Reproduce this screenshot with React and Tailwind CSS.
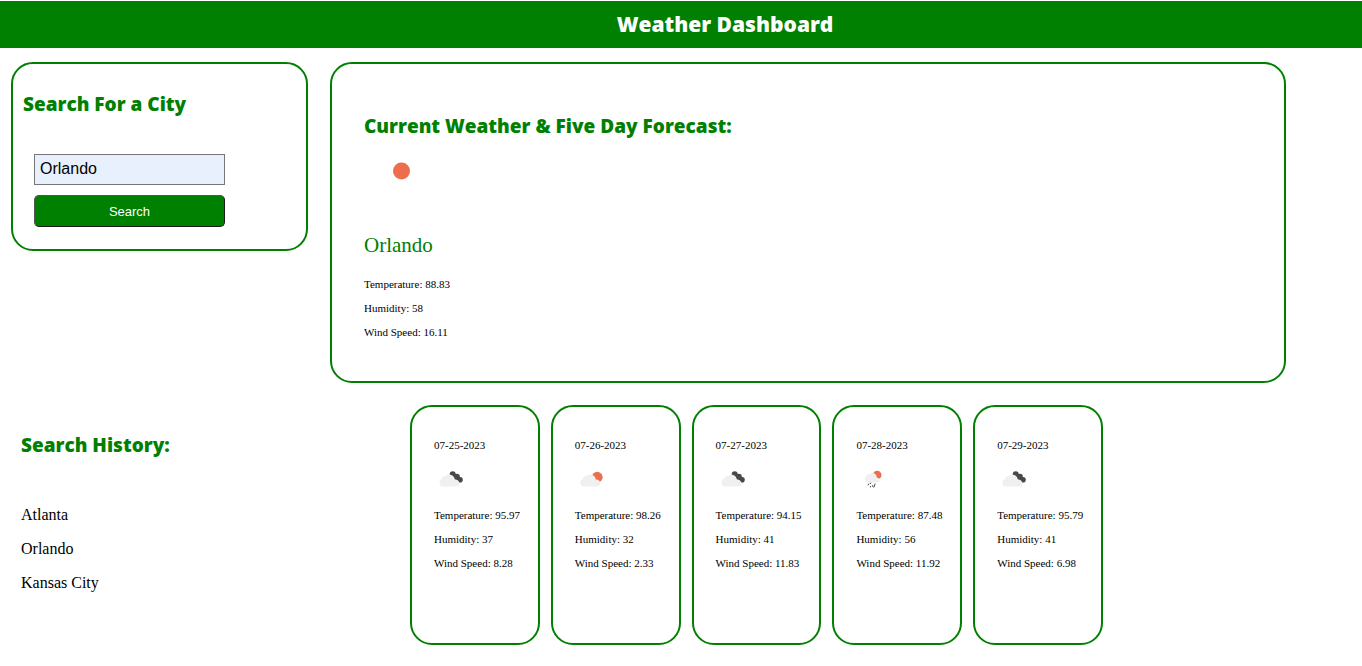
const forecast = [
  { date: "07-25-2023", icon: "broken", temperature: "95.97", humidity: "37", wind: "8.28" },
  { date: "07-26-2023", icon: "few", temperature: "98.26", humidity: "32", wind: "2.33" },
  { date: "07-27-2023", icon: "broken", temperature: "94.15", humidity: "41", wind: "11.83" },
  { date: "07-28-2023", icon: "rain", temperature: "87.48", humidity: "56", wind: "11.92" },
  { date: "07-29-2023", icon: "broken", temperature: "95.79", humidity: "41", wind: "6.98" },
];

const cities = ["Atlanta", "Orlando", "Kansas City"];

function Cloud() {
  return (
    <path
      d="M8.7 26.500a4 4 0 0 1-.6-7.700 3.300 3.300 0 0 1 3.600-2.800 5.400 5.400 0 0 1 9 3.600 4.200 4.200 0 0 1 4.700 4 3.300 3.300 0 0 1-3.200 2.900Z"
      fill="#f0f0f0"
    />
  );
}

function WeatherIcon({ kind }) {
  return (
    <svg className="size-9" viewBox="0 0 36 36" aria-hidden="true">
      {kind === "broken" && (
        <>
          <g fill="#484848">
            <circle cx="18.7" cy="14.3" r="3" />
            <circle cx="22.8" cy="16.9" r="3.1" />
            <circle cx="26" cy="19.7" r="2.8" />
          </g>
          <Cloud />
        </>
      )}
      {kind === "few" && (
        <>
          <circle cx="22.2" cy="17.2" r="5.4" fill="#ec6e4c" />
          <Cloud />
        </>
      )}
      {kind === "rain" && (
        <>
          <circle cx="21.2" cy="15" r="4.3" fill="#ec6e4c" />
          <path
            d="M11.500 22.500a3.400 3.400 0 0 1-.6-6.400 2.500 2.500 0 0 1 2.900-2.200 4.300 4.300 0 0 1 7 3.600 3.100 3.100 0 0 1 2.900 2.800 2.400 2.400 0 0 1-2.400 2.200Z"
            fill="#f0f0f0"
          />
          <g stroke="#484848" strokeWidth="1" strokeLinecap="round">
            <path d="m12.600 24-.5 1M14.600 23.100l-.3.600M14.700 26.300l-.3.700M16.600 25.600l.5 1.300M19 24l-.9 2.900" />
          </g>
        </>
      )}
    </svg>
  );
}

function Heading({ children }) {
  return (
    <h2 className="font-['Gill_Sans','Open_Sans',sans-serif] text-[19px] leading-6 font-extrabold text-[#008000]">
      {children}
    </h2>
  );
}

function Readings({ temperature, humidity, wind }) {
  return (
    <div className="flex flex-col gap-3 text-[11px] leading-3 whitespace-nowrap">
      <p>Temperature: {temperature}</p>
      <p>Humidity: {humidity}</p>
      <p>Wind Speed: {wind}</p>
    </div>
  );
}

export default function App() {
  return (
    <div className="bg-white pt-px font-['Liberation_Serif','Times_New_Roman',serif] text-black">
      <header className="bg-[#008000] py-2 pl-[88px] text-center text-white">
        <h1 className="font-['Gill_Sans','Open_Sans',sans-serif] text-[21px] leading-[31px] font-extrabold">
          Weather Dashboard
        </h1>
      </header>

      <main className="flex flex-col gap-[22px] pt-[14px] pl-[11px]">
        <div className="flex items-start gap-[22px] pr-[76px]">
          <form
            className="w-[297px] shrink-0 rounded-[22px] border-2 border-[#008000] px-[10px] pt-7 pb-[22px]"
            onSubmit={(event) => event.preventDefault()}
          >
            <Heading>
              <label htmlFor="city">Search For a City</label>
            </Heading>
            <div className="mt-[38px] ml-[11px] flex w-[191px] flex-col gap-[10px] font-['Liberation_Sans',Arial,sans-serif]">
              <input
                id="city"
                type="text"
                defaultValue="Orlando"
                className="h-[31px] w-full border border-[#767676] bg-[#e8f0fe] px-[5px] pb-px text-base outline-none"
              />
              <button
                type="submit"
                className="h-8 w-full rounded-[5px] border border-t-[#555555] border-r-[#1c1c1c] border-b-[#1c1c1c] border-l-[#555555] bg-[#008000] pt-px text-[13px] text-white"
              >
                Search
              </button>
            </div>
          </form>

          <section className="min-w-0 grow rounded-[22px] border-2 border-[#008000] px-8 pt-[50px] pb-[43px]">
            <Heading>Current Weather &amp; Five Day Forecast:</Heading>
            <svg className="mt-[-4px] size-[75px]" viewBox="0 0 75 75" role="img" aria-label="Clear sky">
              <circle cx="37.5" cy="37" r="8.5" fill="#ec6e4c" />
            </svg>
            <p className="mt-6 mb-[21px] text-[21px] leading-6 text-[#008000]">Orlando</p>
            <Readings temperature="88.83" humidity="58" wind="16.11" />
          </section>
        </div>

        <div className="flex items-start">
          <section className="w-[399px] shrink-0 pt-7 pl-[10px]">
            <Heading>Search History:</Heading>
            <ul className="mt-[49px] flex flex-col gap-4 text-base leading-[18px]">
              {cities.map((city) => (
                <li key={city}>{city}</li>
              ))}
            </ul>
          </section>

          <div className="grid w-[693px] shrink-0 grid-cols-5 gap-[11px]">
            {forecast.map((day) => (
              <article
                key={day.date}
                className="h-60 rounded-[22px] border-2 border-[#008000] pt-8 pl-[22px]"
              >
                <h3 className="text-[11px] leading-3">{day.date}</h3>
                <div className="mt-[9px] mb-[13px]">
                  <WeatherIcon kind={day.icon} />
                </div>
                <Readings {...day} />
              </article>
            ))}
          </div>
        </div>
      </main>
    </div>
  );
}
